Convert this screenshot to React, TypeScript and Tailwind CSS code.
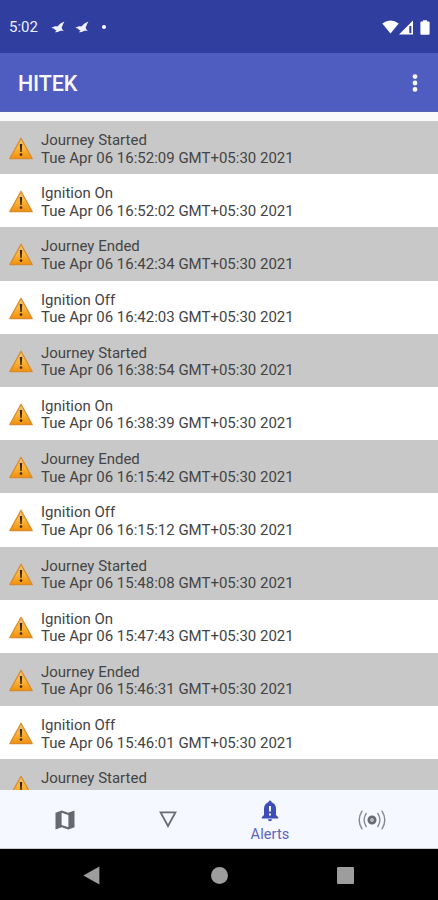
import React from 'react';

interface AlertItem {
  title: string;
  time?: string;
}

const alerts: AlertItem[] = [
  { title: 'Journey Started', time: '16:52:09' },
  { title: 'Ignition On', time: '16:52:02' },
  { title: 'Journey Ended', time: '16:42:34' },
  { title: 'Ignition Off', time: '16:42:03' },
  { title: 'Journey Started', time: '16:38:54' },
  { title: 'Ignition On', time: '16:38:39' },
  { title: 'Journey Ended', time: '16:15:42' },
  { title: 'Ignition Off', time: '16:15:12' },
  { title: 'Journey Started', time: '15:48:08' },
  { title: 'Ignition On', time: '15:47:43' },
  { title: 'Journey Ended', time: '15:46:31' },
  { title: 'Ignition Off', time: '15:46:01' },
  { title: 'Journey Started' },
];

function BirdIcon() {
  return (
    <svg width="14" height="12" viewBox="0 0 14 12" fill="#f0f2ff">
      <path d="M0.3 7 Q3 4.6 6.4 5.4 Q9 2 13.4 0.6 Q11.8 3.4 10.6 6.8 Q10.8 8.4 12.8 9.8 L9.2 9.8 Q7.4 11.6 3.8 11.2 L5.6 9.4 Q3.4 9 3 7.4 Z" />
    </svg>
  );
}

function WarningIcon() {
  return (
    <svg width="26" height="23" viewBox="0 0 26 23" className="shrink-0">
      <defs>
        <linearGradient id="warn" x1="0" y1="0" x2="0" y2="1">
          <stop offset="0" stopColor="#eec27c" />
          <stop offset="0.5" stopColor="#fbb53a" />
          <stop offset="1" stopColor="#f0900c" />
        </linearGradient>
      </defs>
      <path d="M13 1.2 L24.2 21.6 H1.8 Z" fill="url(#warn)" stroke="#d98a2c" strokeWidth="1.2" strokeLinejoin="round" />
      <path d="M11.8 7 H14.2 L13.7 15 H12.3 Z" fill="#3b2a10" />
      <circle cx="13" cy="17.6" r="1.3" fill="#3b2a10" />
    </svg>
  );
}

function StatusBar() {
  return (
    <div className="h-[52.5px] shrink-0 bg-[#303f9f] flex items-center pl-[9px] pr-[8px] pt-[2px] text-white">
      <span className="text-[15px] leading-none w-[42px] text-[#eef0ff]">5:02</span>
      <div className="flex items-center gap-[10px]">
        <BirdIcon />
        <BirdIcon />
        <span className="ml-[3px] size-1 rounded-full bg-white" />
      </div>
      <div className="ml-auto flex items-center">
        <svg width="17" height="14" viewBox="0 0 17 14" fill="#fff">
          <path d="M8.5 13.6 L0.3 3.6 Q8.5 -2.6 16.7 3.6 Z" />
        </svg>
        <svg width="15" height="15" viewBox="0 0 15 15">
          <path d="M0 14.5 L14 0.5 V14.5 Z" fill="#fff" />
          <path d="M10.3 6 H12.4 V13.2 H10.3 Z" fill="#303f9f" />
        </svg>
        <svg width="10" height="15" viewBox="0 0 10 15" fill="#fff" className="ml-[6px]">
          <path d="M3 0.3 H7 V1.6 H8.8 Q9.6 1.6 9.6 2.6 V13.8 Q9.6 14.7 8.8 14.7 H1.2 Q0.4 14.7 0.4 13.8 V2.6 Q0.4 1.6 1.2 1.6 H3 Z" />
        </svg>
      </div>
    </div>
  );
}

function AppBar() {
  return (
    <header className="h-[59.5px] shrink-0 bg-[#4f5cc0] border-b border-[#5a64b4] flex items-center justify-between pl-[18px] pr-[20px] pt-[2px]">
      <h1 className="pt-[2px] text-[21.5px] leading-none font-medium tracking-[-0.15px] text-[#f8f9ff]">HITEK</h1>
      <svg width="6" height="18" viewBox="0 0 6 18" fill="#f8f9ff">
        <circle cx="3" cy="2.6" r="2.4" />
        <circle cx="3" cy="9" r="2.4" />
        <circle cx="3" cy="15.4" r="2.4" />
      </svg>
    </header>
  );
}

function AlertRow({ title, time, shaded }: AlertItem & { shaded: boolean }) {
  return (
    <li className={`h-[53.2px] shrink-0 flex items-start pl-[8px] ${shaded ? 'bg-[#c8c8c8]' : 'bg-white'}`}>
      <div className="pt-[16px]">
        <WarningIcon />
      </div>
      <div className="ml-[7px] pt-[11.1px] text-[15px] leading-[17.4px] text-[#444] whitespace-nowrap">
        <p>{title}</p>
        {time && <p>Tue Apr 06 {time} GMT+05:30 2021</p>}
      </div>
    </li>
  );
}

function BottomNav() {
  return (
    <nav className="h-[59px] shrink-0 bg-[#f5f8ff] grid grid-cols-[102px_102px_102px_102px] pl-[15px] border-b border-[#c8cad0]">
      <div className="flex items-center justify-center pt-[2px] pr-[2px]">
        <svg width="20" height="20" viewBox="0 0 20 20">
          <path d="M0.5 2.8 L6.8 0.5 L13.2 2.8 L19.5 0.5 V17.2 L13.2 19.5 L6.8 17.2 L0.5 19.5 Z" fill="#66696d" />
          <path d="M6.6 2.8 L13.4 5 V17.2 L6.6 15 Z" fill="#f5f8ff" />
        </svg>
      </div>
      <div className="flex items-center justify-center pt-px">
        <svg width="18" height="17" viewBox="0 0 18 17">
          <path d="M1.6 1.4 H16.4 L9 15 Z" fill="none" stroke="#696c70" strokeWidth="1.8" />
        </svg>
      </div>
      <div className="flex flex-col items-center pt-[10px] text-[#5c64bc]">
        <svg width="18" height="22" viewBox="0 0 18 22">
          <path d="M9 0.5 Q10.6 0.5 10.6 2.3 Q15 3.8 15 9 V15 L17.2 17.2 V18.4 H0.8 V17.2 L3 15 V9 Q3 3.8 7.4 2.3 Q7.4 0.5 9 0.5 Z" fill="#3f4db8" />
          <path d="M6.9 19.3 H11.1 Q11 21.3 9 21.3 Q7 21.3 6.9 19.3 Z" fill="#3f4db8" />
          <path d="M8 6 H10 V11.5 H8 Z M8 13.4 H10 V15.4 H8 Z" fill="#f5f8ff" />
        </svg>
        <span className="mt-[4px] text-[14.5px] leading-[17px] tracking-[0.1px]">Alerts</span>
      </div>
      <div className="flex items-center justify-center pt-[2px]">
        <svg width="28" height="20" viewBox="0 0 28 20" fill="none" stroke="#85888c" strokeWidth="1.4" strokeLinecap="round">
          <circle cx="14" cy="10" r="3.1" stroke="#66696d" strokeWidth="2.8" />
          <circle cx="14" cy="10" r="1" fill="#9a9da1" stroke="none" />
          <path d="M8.2 3.4 Q4 10 8.2 16.6" />
          <path d="M4 1.2 Q-1.6 10 4 18.8" />
          <path d="M19.8 3.4 Q24 10 19.8 16.6" />
          <path d="M24 1.2 Q29.6 10 24 18.8" />
        </svg>
      </div>
    </nav>
  );
}

function SystemNav() {
  return (
    <div className="h-[51px] shrink-0 bg-black flex items-center pt-px pl-[83px]">
      <svg width="17" height="19" viewBox="0 0 17 19">
        <path d="M0.3 9.5 L16.4 0.5 V18.5 Z" fill="#9d9d9d" />
      </svg>
      <span className="ml-[111px] size-[17px] rounded-full bg-[#9d9d9d]" />
      <span className="ml-[109px] size-[17px] rounded-[1px] bg-[#9d9d9d]" />
    </div>
  );
}

export default function App() {
  return (
    <div className="w-[438px] h-[900px] flex flex-col overflow-hidden bg-[#fafafa] font-[Roboto,sans-serif]">
      <StatusBar />
      <AppBar />
      <main className="flex-1 min-h-0 overflow-hidden pt-[9px]">
        <ul className="flex flex-col">
          {alerts.map((alert, idx) => (
            <AlertRow key={idx} title={alert.title} time={alert.time} shaded={idx % 2 === 0} />
          ))}
        </ul>
      </main>
      <BottomNav />
      <SystemNav />
    </div>
  );
}
